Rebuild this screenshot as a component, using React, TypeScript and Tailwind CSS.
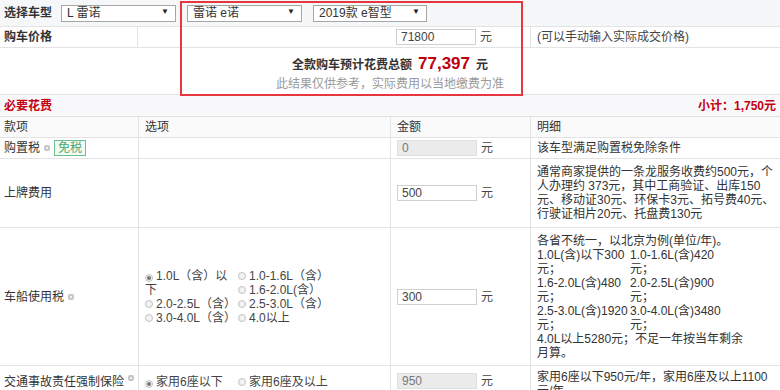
import React from "react";

const grid = "grid grid-cols-[138px_252px_140px_1fr]";
const line = "border-[#e3e3e3]";

function FakeSelect({ text, width }: { text: string; width: string }) {
  return (
    <div
      className={`${width} h-[17px] border border-[#a6a6a6] bg-white flex items-center justify-between pl-[5px] pr-[6px] text-[12px] text-[#333]`}
    >
      <span>{text}</span>
      <span className="text-[8px] leading-none text-[#222] -mt-[3px]">▼</span>
    </div>
  );
}

function Field({ value, disabled }: { value: string; disabled?: boolean }) {
  return (
    <div className="flex items-center gap-[4px]">
      <div
        className={`w-[80px] h-[16px] border flex items-center px-[4px] text-[12px] ${
          disabled
            ? "bg-[#ebebeb] border-[#e0e0e0] text-[#777]"
            : "bg-white border-[#cfcfcf] text-[#444]"
        }`}
      >
        {value}
      </div>
      <span className="text-[12px] text-[#444]">元</span>
    </div>
  );
}

function Info() {
  return (
    <span className="inline-flex items-center justify-center w-[6px] h-[6px] rounded-[2px] bg-[#c6c6c6] ml-[4px] align-middle">
      <span className="w-[2px] h-[2px] bg-white rounded-full" />
    </span>
  );
}

function Radio({ checked }: { checked?: boolean }) {
  return (
    <span className="inline-flex items-center justify-center w-[8px] h-[8px] rounded-full border border-[#c2c2c2] bg-[#f2f2f2] mr-[3px] align-[-0px]">
      {checked && <span className="w-[4px] h-[4px] rounded-full bg-[#777]" />}
    </span>
  );
}

export default function App() {
  return (
    <div className="relative w-[780px] h-[390px] overflow-hidden bg-white text-[12px] leading-[14px] text-[#333] font-['Liberation_Sans','Noto_Sans_CJK_SC',sans-serif]">
      {/* 选择车型 */}
      <div className={`flex items-center h-[27px] bg-[#f6f7f9] border-b ${line} pl-[4px]`}>
        <span className="w-[57px] font-bold text-[12px]">选择车型</span>
        <div className="flex gap-[11px]">
          <FakeSelect text="L 雷诺" width="w-[115px]" />
          <FakeSelect text="雷诺 e诺" width="w-[115px]" />
          <FakeSelect text="2019款 e智型" width="w-[114px]" />
        </div>
      </div>

      {/* 购车价格 */}
      <div className={`${grid} h-[21px] border-b ${line}`}>
        <div className={`flex items-center pl-[4px] font-bold border-r ${line}`}>购车价格</div>
        <div />
        <div className="flex items-center pl-[6px]">
          <Field value="71800" />
        </div>
        <div className={`flex items-center pl-[6px] border-l ${line} text-[#444]`}>
          (可以手动输入实际成交价格)
        </div>
      </div>

      {/* 总额 */}
      <div className={`h-[47px] border-b ${line} flex flex-col items-center pt-[7px]`}>
        <div className="flex items-baseline font-bold">
          <span className="text-[12px]">全款购车预计花费总额</span>
          <span className="ml-[6px] text-[17px] leading-[18px] text-[#c0000d]">77,397</span>
          <span className="ml-[6px] text-[12px]">元</span>
        </div>
        <div className="mt-[4px] text-[12px] text-[#9a9a9a]">此结果仅供参考，实际费用以当地缴费为准</div>
      </div>

      {/* 必要花费 */}
      <div className={`flex items-center justify-between h-[22px] bg-[#f8f8fa] border-b ${line} px-[4px] font-bold text-[#c40012]`}>
        <span>必要花费</span>
        <span>小计：1,750元</span>
      </div>

      {/* 表头 */}
      <div className={`${grid} h-[21px] border-b ${line} bg-[#fafafa]`}>
        <div className="flex items-center pl-[4px]">款项</div>
        <div className={`flex items-center pl-[6px] border-l ${line}`}>选项</div>
        <div className={`flex items-center pl-[6px] border-l ${line}`}>金额</div>
        <div className={`flex items-center pl-[6px] border-l ${line}`}>明细</div>
      </div>

      {/* 购置税 */}
      <div className={`${grid} h-[21px] border-b ${line}`}>
        <div className="flex items-center pl-[4px]">
          购置税
          <Info />
          <span className="ml-[4px] px-[3px] h-[16px] flex items-center border border-[#6cbf8c] bg-[#f3fbf6] text-[#4aa86f]">
            免税
          </span>
        </div>
        <div className={`border-l ${line}`} />
        <div className={`flex items-center pl-[6px] border-l ${line}`}>
          <Field value="0" disabled />
        </div>
        <div className={`flex items-center pl-[6px] border-l ${line}`}>该车型满足购置税免除条件</div>
      </div>

      {/* 上牌费用 */}
      <div className={`${grid} h-[69px] border-b ${line}`}>
        <div className="flex items-center pl-[4px]">上牌费用</div>
        <div className={`border-l ${line}`} />
        <div className={`flex items-center pl-[6px] border-l ${line}`}>
          <Field value="500" />
        </div>
        <div className={`flex items-center pl-[6px] pr-[4px] border-l ${line} leading-[14px]`}>
          <div>
            通常商家提供的一条龙服务收费约500元，个
            <br />
            人办理约 373元，其中工商验证、出库150
            <br />
            元、移动证30元、环保卡3元、拓号费40元、
            <br />
            行驶证相片20元、托盘费130元
          </div>
        </div>
      </div>

      {/* 车船使用税 */}
      <div className={`${grid} h-[138px] border-b ${line}`}>
        <div className="flex items-center pl-[4px]">
          车船使用税
          <Info />
        </div>
        <div className={`flex items-center pl-[6px] border-l ${line} text-[#444]`}>
          <div className="grid grid-cols-[93px_auto] leading-[14px]">
            <div className="row-span-2">
              <Radio checked />
              1.0L（含）以
              <br />下
            </div>
            <div>
              <Radio />
              1.0-1.6L（含）
            </div>
            <div>
              <Radio />
              1.6-2.0L(含）
            </div>
            <div>
              <Radio />
              2.0-2.5L（含）
            </div>
            <div>
              <Radio />
              2.5-3.0L（含）
            </div>
            <div>
              <Radio />
              3.0-4.0L（含）
            </div>
            <div>
              <Radio />
              4.0以上
            </div>
          </div>
        </div>
        <div className={`flex items-center pl-[6px] border-l ${line}`}>
          <Field value="300" />
        </div>
        <div className={`flex items-center pl-[6px] border-l ${line} leading-[14px]`}>
          <div>
            <div>各省不统一，以北京为例(单位/年)。</div>
            <div className="grid grid-cols-[93px_auto]">
              <div>
                1.0L(含)以下300
                <br />
                元；
              </div>
              <div>
                1.0-1.6L(含)420
                <br />
                元；
              </div>
              <div>
                1.6-2.0L(含)480
                <br />
                元；
              </div>
              <div>
                2.0-2.5L(含)900
                <br />
                元；
              </div>
              <div>
                2.5-3.0L(含)1920
                <br />
                元；
              </div>
              <div>
                3.0-4.0L(含)3480
                <br />
                元；
              </div>
            </div>
            <div>
              4.0L以上5280元；不足一年按当年剩余
              <br />
              月算。
            </div>
          </div>
        </div>
      </div>

      {/* 交强险 */}
      <div className={`${grid} h-[40px]`}>
        <div className="flex items-start pt-[9px] pl-[4px]">
          交通事故责任强制保险
          <Info />
        </div>
        <div className={`flex items-start pt-[9px] pl-[6px] border-l ${line} text-[#444]`}>
          <div className="grid grid-cols-[93px_auto]">
            <div>
              <Radio checked />
              家用6座以下
            </div>
            <div>
              <Radio />
              家用6座及以上
            </div>
          </div>
        </div>
        <div className={`flex items-start pt-[7px] pl-[6px] border-l ${line}`}>
          <Field value="950" disabled />
        </div>
        <div className={`pt-[4px] pl-[6px] border-l ${line} leading-[14px]`}>
          家用6座以下950元/年，家用6座及以上1100
          <br />
          元/年
        </div>
      </div>

      {/* 红框标注 */}
      <div className="absolute left-[180px] top-[1px] w-[343px] h-[95px] border-2 border-[#e5373d] pointer-events-none" />
    </div>
  );
}
